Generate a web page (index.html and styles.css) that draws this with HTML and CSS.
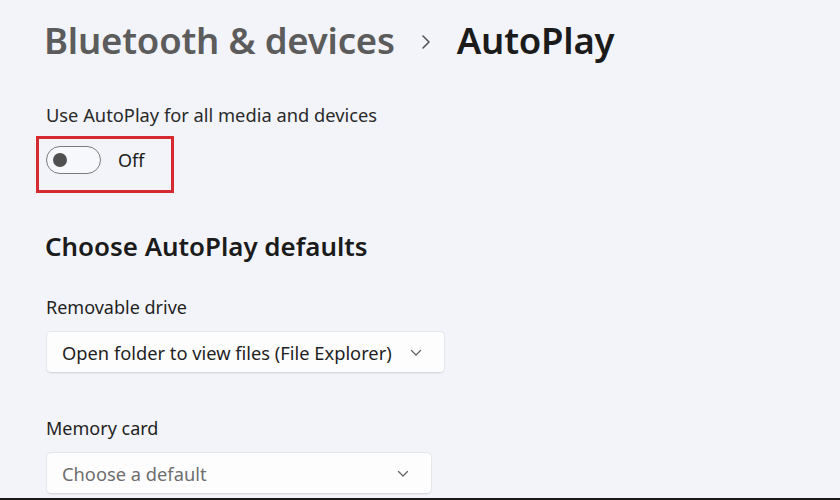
FILE: index.html
```html
<!DOCTYPE html>
<html>
<head>
<meta charset="utf-8">
<link rel="stylesheet" href="styles.css">
</head>
<body>
<div class="page">
  <header class="breadcrumb">
    <span class="crumb-parent">Bluetooth &amp; devices</span>
    <svg class="crumb-sep" width="12" height="16" viewBox="0 0 12 16"><path d="M3 2 L9 8 L3 14" fill="none" stroke="#555" stroke-width="1.6" stroke-linecap="round" stroke-linejoin="round"/></svg>
    <span class="crumb-current">AutoPlay</span>
  </header>

  <section class="setting">
    <div class="setting-label">Use AutoPlay for all media and devices</div>
    <div class="toggle-row">
      <span class="toggle"><span class="knob"></span></span>
      <span class="toggle-text">Off</span>
    </div>
  </section>

  <h2 class="section-title">Choose AutoPlay defaults</h2>

  <div class="field">
    <div class="field-label">Removable drive</div>
    <div class="select select-wide">
      <span class="select-value">Open folder to view files (File Explorer)</span>
      <svg class="chev" width="12" height="8" viewBox="0 0 12 8"><path d="M1.5 1.5 L6 6 L10.5 1.5" fill="none" stroke="#666" stroke-width="1.3" stroke-linecap="round" stroke-linejoin="round"/></svg>
    </div>
  </div>

  <div class="field">
    <div class="field-label">Memory card</div>
    <div class="select select-narrow">
      <span class="select-value placeholder">Choose a default</span>
      <svg class="chev" width="12" height="8" viewBox="0 0 12 8"><path d="M1.5 1.5 L6 6 L10.5 1.5" fill="none" stroke="#666" stroke-width="1.3" stroke-linecap="round" stroke-linejoin="round"/></svg>
    </div>
  </div>
</div>
</body>
</html>
```
FILE: styles.css
```css
* { box-sizing: border-box; }
html, body { margin: 0; padding: 0; }
body {
  width: 840px;
  height: 500px;
  overflow: hidden;
  background: #f2f4f9;
  font-family: "Noto Sans", "Open Sans", sans-serif;
  color: #1b1b1b;
  border-bottom: 2px solid #1a1a1a;
}
.page {
  padding: 12px 0 0 44px;
}
.breadcrumb {
  display: flex;
  align-items: center;
  height: 56px;
  font-size: 36.5px;
  font-weight: 600;
  letter-spacing: -0.2px;
}
.crumb-parent { color: #5c5c5c; }
.crumb-sep { margin: 4px 25px 0 25px; }
.crumb-current { color: #1b1b1b; }

.setting { margin-top: 35px; }
.setting-label {
  font-size: 18.3px;
  line-height: 24px;
  color: #2a2a2a;
  margin-left: 2px;
}
.toggle-row {
  display: flex;
  align-items: flex-start;
  margin-top: 9px;
  margin-left: -8px;
  padding: 7px 0 0 7px;
  border: 3px solid #d42a30;
  width: 138px;
  height: 57px;
}
.toggle {
  display: block;
  position: relative;
  flex: none;
  width: 55px;
  height: 28px;
  border: 1.5px solid #7a7a7a;
  border-radius: 14px;
  background: #f7f8fb;
}
.knob {
  position: absolute;
  left: 6px;
  top: 5.5px;
  width: 14px;
  height: 14px;
  border-radius: 50%;
  background: #505050;
}
.toggle-text {
  margin-left: 17px;
  font-size: 18px;
  line-height: 28px;
  color: #1b1b1b;
}

.section-title {
  margin: 36px 0 0 1px;
  font-size: 25.9px;
  font-weight: 600;
  color: #1b1b1b;
  line-height: 34px;
}

.field { margin-top: 33px; margin-left: 2px; }
.field + .field { margin-top: 44px; }
.field-label {
  font-size: 18px;
  color: #1f1f1f;
  line-height: 22px;
}
.select {
  display: flex;
  align-items: center;
  justify-content: space-between;
  margin-top: 13px;
  height: 42px;
  padding: 0 22px 0 15px;
  background: #fdfdfe;
  border: 1px solid #e4e6ea;
  border-bottom-color: #d6d8dc;
  border-radius: 5px;
  box-shadow: 0 1px 1px rgba(0,0,0,0.04);
}
.select-wide { width: 399px; }
.select-narrow { width: 386px; }
.select-value { font-size: 18.3px; color: #1f1f1f; }
.select-value.placeholder { color: #6e6e6e; }
.chev { margin-top: 1px; }
```
